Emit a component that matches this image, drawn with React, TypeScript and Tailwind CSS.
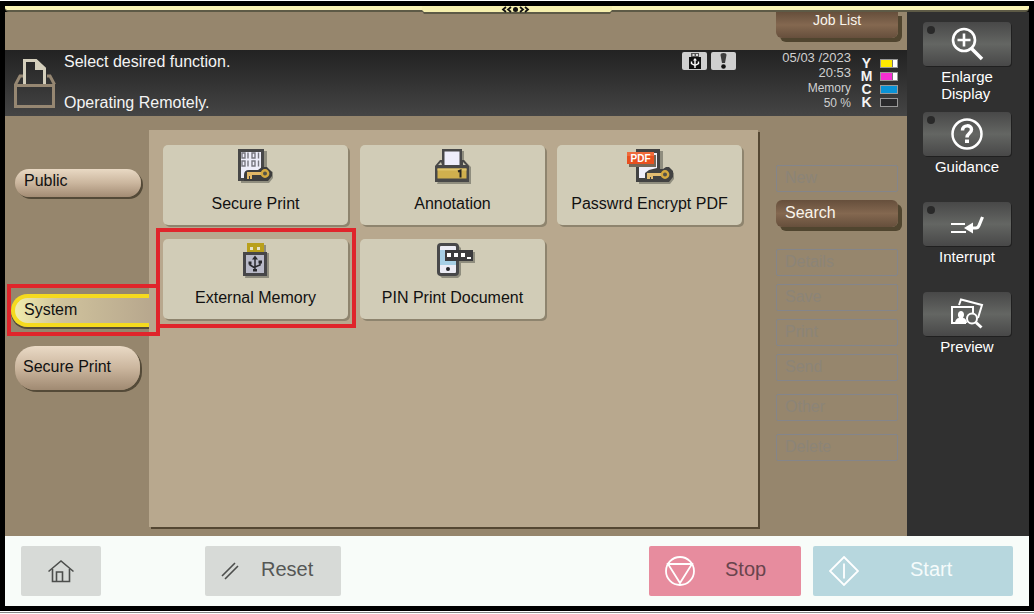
import type { ReactNode } from "react";
import clsx from "clsx";

const SecurePrintIcon = () => (
  <svg width="36" height="36" viewBox="0 0 36 36" aria-hidden="true">
    <path d="M3 3h26v18l6 3v6l-4 5H3z" fill="#8f8d7e" />
    <rect x="0" y="1" width="26" height="32" fill="#474747" />
    <rect x="3" y="4" width="20" height="26" fill="#eeeefa" />
    <g fill="none" stroke="#77777f" strokeWidth="1.4">
      <path d="M4 5h3v5H4zM10 4.500v6M14 5h3v5h-3zM20.500 4.500v6" />
      <path d="M4 13h3v5H4zM10 12.500v6M14 13h3v5h-3zM20.500 12.500v6" />
    </g>
    <g transform="translate(0 2)">
      <path d="M6 25q0-5 5-5h9l4-3h5l5 5v4l-4 5H6z" fill="#3d3d3d" />
      <path d="M9 22h15v3H14v4h-2v-3h-1v3H9z" fill="#e2b766" />
      <circle cx="27" cy="23.500" r="3.200" fill="#545448" stroke="#d5a93f" strokeWidth="2.400" />
    </g>
  </svg>
);

const AnnotationIcon = () => (
  <svg width="38" height="36" viewBox="0 0 38 36" aria-hidden="true">
    <path d="M11 3h19v9l7 7v17H3l7-18z" fill="#8f8d7e" />
    <path d="M8 1h20v11h2l5 6v16H1V18l5-6h2z" fill="#484848" />
    <path d="M7 14l-3 3h4zM29 14l3 3h-3z" fill="#c9c6b2" />
    <path d="M10.500 3.500h15V17h-15z" fill="#eeeefb" />
    <path d="M3.500 20.500h29v10h-29z" fill="#d0b04e" />
    <path d="M3.500 20.500h29v2h-29z" fill="#dfc46c" />
    <path d="M24 23.500l2.500-1v7" fill="none" stroke="#292620" strokeWidth="2" />
  </svg>
);

const PdfIcon = () => (
  <svg width="48" height="36" viewBox="0 0 48 36" aria-hidden="true">
    <path d="M13 3h24v18h6l5 4v6l-4 5H13z" fill="#8f8d7e" />
    <path d="M10 1h24v20h3l3-2h3l4 4v6l-4 5H10z" fill="#424242" />
    <path d="M13 17h15V5h3v15l-8 2-4 3v5h-6z" fill="#f0effa" />
    <path d="M3 7h27v12H3z" fill="#756757" />
    <path d="M1 4h27v12H1z" fill="#e8501f" />
    <path d="M1 4h27v4H1z" fill="#ef6b3c" />
    <text x="14.500" y="14" textAnchor="middle" fontSize="10" className="fill-white font-['Liberation_Sans',sans-serif] font-bold">
      PDF
    </text>
    <path d="M21 25h14v3h-8v3h-2v-2h-1v2h-3z" fill="#e3bd72" />
    <circle cx="39" cy="26.500" r="3.200" fill="#565349" stroke="#d5a93f" strokeWidth="2.400" />
  </svg>
);

const UsbIcon = () => (
  <svg width="28" height="36" viewBox="0 0 28 36" aria-hidden="true">
    <path d="M7 3h17v8h3v25H3l4-24z" fill="#8f8d7e" />
    <path d="M5 1h17v9H5z" fill="#b9a01c" />
    <path d="M8 5h3v3H8zM15 5h3v3h-3z" fill="#e7e3c8" />
    <path d="M1 10h24v24H1z" fill="#464648" />
    <path d="M4 13h18v18H4z" fill="#b9bac8" />
    <path d="M13 16v12M8 21v2l5 3M18 20v3l-5 2" fill="none" stroke="#29292c" strokeWidth="1.500" />
    <path d="M13 13.500l3 4h-6zM6.500 19.500h3v3h-3zM16.500 18.500h3.500v3h-3.500zM11 27h4v2.500h-4z" fill="#29292c" />
  </svg>
);

const PinIcon = () => (
  <svg width="44" height="36" viewBox="-5 0 44 36" aria-hidden="true">
    <path d="M6 3h16l3 3v4h14v11H25v12l-3 3H6l-3-3z" fill="#8f8d7e" />
    <rect x="1" y="1" width="22" height="33" rx="4" fill="#48484a" />
    <rect x="4" y="4" width="16" height="27" rx="1" fill="#ececf5" />
    <path d="M4 8h16v15H4z" fill="#a7cfe5" />
    <circle cx="12" cy="27" r="2" fill="#252529" />
    <path d="M9 8h28v11H9z" fill="#3b3b3d" />
    <path d="M11 11h4v4h-4zM18 11h4v4h-4zM25 11h4v4h-4zM31 15h4v2h-4z" fill="#fff" />
  </svg>
);

const BoxIcon = () => (
  <svg width="42" height="50" viewBox="0 0 42 50" fill="none" aria-hidden="true">
    <path d="M9 17H6L1.500 25.500M33 17h3l4.500 8.500" stroke="#968772" strokeWidth="3" />
    <path d="M1.500 26.500h38v21h-38z" stroke="#968772" strokeWidth="3" />
    <path d="M10.500 25V1.500h11.500l8.500 8V25" stroke="#d4cfbc" strokeWidth="3" />
    <path d="M21 1l11 10H21z" fill="#d4cfbc" />
  </svg>
);

const EnlargeIcon = () => (
  <svg width="34" height="34" viewBox="0 0 34 34" fill="none" stroke="#fff" strokeWidth="2.600" aria-hidden="true">
    <circle cx="14" cy="13" r="11" />
    <path d="M14 6.500v13M7.500 13h13" />
    <path d="M21.500 21.500L32 32" strokeWidth="3.500" />
  </svg>
);

const HelpIcon = () => (
  <svg width="34" height="34" viewBox="0 0 34 34" fill="none" stroke="#fff" aria-hidden="true">
    <circle cx="17" cy="17" r="14.500" strokeWidth="2.500" />
    <path d="M12.500 13.500c0-6 9-6 9-1 0 4-4.500 3.500-4.500 8" strokeWidth="3.500" />
    <path d="M15 22.500h4V26h-4z" fill="#fff" stroke="none" />
  </svg>
);

const InterruptIcon = () => (
  <svg width="34" height="20" viewBox="0 -2 34 20" fill="none" stroke="#fff" aria-hidden="true">
    <path d="M1 8h14M1 16h15" strokeWidth="2" />
    <path d="M20 12h6q2 0 3-2.500L32.500 1" strokeWidth="3.200" />
    <path d="M14 12l9-5.500v11z" fill="#fff" stroke="none" />
  </svg>
);

const PreviewIcon = () => (
  <svg width="34" height="32" viewBox="0 0 34 32" fill="none" stroke="#fff" strokeWidth="2" aria-hidden="true">
    <path d="M9 7l2-5.500 21 5.500-4 13" />
    <path d="M16 25H2V9h21v6" />
    <path d="M5 25c0-3 2-5 4-5-2-3-1-7 2-7s4 4 2 7c2 0 4 2 4 5z" fill="#fff" stroke="none" />
    <circle cx="22" cy="20.500" r="5" />
    <path d="M26 24.500l5.500 5" strokeWidth="3" />
  </svg>
);

const HomeIcon = () => (
  <svg width="26" height="24" viewBox="0 0 26 24" fill="none" stroke="#4c4e4c" strokeWidth="1.600" aria-hidden="true">
    <path d="M.5 12.500L13 2l12.500 10.500" />
    <path d="M4.500 10v12.500h17V10M8.500 22v-9h6v9" />
  </svg>
);

const toners = [
  { label: "Y", level: "bg-[#ffe900]", width: "w-[12px]" },
  { label: "M", level: "bg-[#f62ed2]", width: "w-[12px]" },
  { label: "C", level: "bg-[#0a93d6]", width: "w-full" },
  { label: "K", level: "bg-[#29292b]", width: "w-full" },
];

const tiles: { label: string; icon: ReactNode; marked?: boolean }[] = [
  { label: "Secure Print", icon: <SecurePrintIcon /> },
  { label: "Annotation", icon: <AnnotationIcon /> },
  { label: "Passwrd Encrypt PDF", icon: <PdfIcon /> },
  { label: "External Memory", icon: <UsbIcon />, marked: true },
  { label: "PIN Print Document", icon: <PinIcon /> },
];

const sideKeys: { label: string; icon: ReactNode; lamp: boolean }[] = [
  { label: "Enlarge Display", icon: <EnlargeIcon />, lamp: true },
  { label: "Guidance", icon: <HelpIcon />, lamp: true },
  { label: "Interrupt", icon: <InterruptIcon />, lamp: true },
  { label: "Preview", icon: <PreviewIcon />, lamp: false },
];

const brownButton =
  "w-[122px] bg-linear-to-b from-[#664f3c] via-[#846850] to-[#664f3c] text-[#faf5ec] shadow-[4px_4px_0_#50452f]";

const GhostButton = ({ label, className }: { label: string; className?: string }) => (
  <button
    disabled
    className={clsx(
      "h-[27px] w-[122px] rounded-xs border border-[#84858a] pb-px pl-2 text-left leading-4 text-[#8b8478]",
      className,
    )}
  >
    {label}
  </button>
);

const Header = () => (
  <header className="flex h-[66px] bg-linear-to-b from-[#222] to-[#454545] pr-[9px] pl-[9px] text-[#f4f4f4]">
    <div className="pt-[9px]">
      <BoxIcon />
    </div>
    <div className="flex flex-1 flex-col justify-between pt-[3px] pb-1 pl-2">
      <p className="leading-[18px]">Select desired function.</p>
      <p className="leading-[18px]">Operating Remotely.</p>
    </div>
    <div className="flex gap-1 pt-[2px]">
      <svg width="25" height="18" viewBox="0 0 25 18" role="img" aria-label="USB connected">
        <rect width="25" height="18" rx="2" fill="#cfcfcf" />
        <path d="M9 1h8v4H9z" fill="#555" />
        <path d="M10.500 2h2v2h-2zM14 2h2v2h-2z" fill="#ddd" />
        <path d="M7 5h12v12H7z" fill="#111" />
        <path d="M13 7v9M9.500 9.500v2l3.500 2M16.500 9.500v2l-3.500 2" fill="none" stroke="#fff" strokeWidth="1.400" />
        <path d="M11 8.500l2-2.500 2 2.500z" fill="#fff" />
      </svg>
      <svg width="25" height="18" viewBox="0 0 25 18" role="img" aria-label="Warning">
        <rect width="25" height="18" rx="2" fill="#cfcfcf" />
        <path d="M9.500 3q0-2 3-2t3 2l-1.500 8h-3z" fill="#3c3c3c" />
        <circle cx="12.500" cy="14.500" r="2.300" fill="#111" />
      </svg>
    </div>
    <div className="w-[115px] text-right text-xs leading-[15px] text-[#d0d0d0]">
      <p className="text-[13px] leading-[15px]">05/03 /2023</p>
      <p className="text-[13px] leading-[15px]">20:53</p>
      <p className="mt-px">Memory</p>
      <p>50 %</p>
    </div>
    <ul className="ml-2 pt-[7px]">
      {toners.map((toner) => (
        <li key={toner.label} className="flex h-[13px] items-center gap-[6px]">
          <span className="w-[15px] text-center text-sm leading-[13px] font-bold">{toner.label}</span>
          <span className="flex h-[9px] w-[18px] border border-[#999] bg-white">
            <span
              className={clsx("h-full", toner.level, toner.width, toner.width === "w-[12px]" && "border-r border-[#777]")}
            />
          </span>
        </li>
      ))}
    </ul>
  </header>
);

const BoxTabs = () => (
  <nav className="flex w-36 flex-col items-start pt-[53px] pl-[10px]">
    <button className="h-7 w-[126px] rounded-[14px] bg-linear-to-b from-[#e9d9c4] via-[#cbb69e] to-[#a38c74] pb-1 pl-[9px] text-left leading-5 shadow-[2px_2px_0_#544a38]">
      Public
    </button>
    <div className="relative mt-[97px] -ml-1 self-stretch">
      <button className="h-[33px] w-full rounded-l-full border-y-4 border-l-4 border-[#f5da1f] bg-linear-to-r from-[#f0edac] via-[#cfc29c] via-35% to-[#b8a88e] pb-[2px] pl-[9px] text-left leading-5 shadow-[0_2px_0_#544a38]">
        System
      </button>
      <span className="pointer-events-none absolute -top-[10px] -right-[11px] -bottom-[9px] -left-1 border-4 border-[#e0252b]" />
    </div>
    <button className="mt-[19px] h-11 w-[125px] rounded-[20px] bg-linear-to-b from-[#eadac6] via-[#cbb69e] to-[#a08a72] pb-[2px] pl-2 text-left leading-5 shadow-[2px_2px_0_#544a38]">
      Secure Print
    </button>
  </nav>
);

const FunctionPanel = () => (
  <main className="mt-[14px] mb-[9px] flex-1 bg-[#b8a88e] pt-[15px] pr-4 pl-[14px] shadow-[2px_2px_0_#544733]">
    <div className="grid grid-cols-3 gap-x-3 gap-y-[14px]">
      {tiles.map((tile) => (
        <div key={tile.label} className="relative">
          <button className="flex h-20 w-full flex-col items-center rounded-[5px] bg-[#d1ccb7] pt-[3px] shadow-[2px_2px_0_#8e846e]">
            {tile.icon}
            <span className="mt-[10px] leading-5">{tile.label}</span>
          </button>
          {tile.marked && (
            <span className="pointer-events-none absolute -top-[11px] -right-2 -bottom-[9px] -left-[7px] border-4 border-[#e0252b]" />
          )}
        </div>
      ))}
    </div>
  </main>
);

const ActionColumn = () => (
  <div className="flex w-[149px] flex-col pt-[49px] pl-[18px]">
    <GhostButton label="New" />
    <button className={clsx(brownButton, "mt-2 h-[27px] rounded-md pb-[2px] pl-[9px] text-left leading-4")}>
      Search
    </button>
    <GhostButton label="Details" className="mt-[22px]" />
    <GhostButton label="Save" className="mt-2" />
    <GhostButton label="Print" className="mt-2" />
    <GhostButton label="Send" className="mt-2" />
    <GhostButton label="Other" className="mt-[13px]" />
    <GhostButton label="Delete" className="mt-[13px]" />
  </div>
);

const SideKeys = () => (
  <aside className="w-[122px] bg-[#303030] pt-[10px] pl-4 text-[15px] text-white">
    {sideKeys.map((key) => (
      <div key={key.label} className="flex h-[90px] w-[88px] flex-col items-center">
        <button
          aria-label={key.label}
          className="relative flex h-11 w-full shrink-0 items-center justify-center rounded-sm bg-linear-to-b from-[#484848] via-[#646663] to-[#484848] shadow-[1px_1px_0_#202020]"
        >
          {key.lamp && <span className="absolute top-1 left-1 size-2 rounded-full bg-[#292929]" />}
          {key.icon}
        </button>
        <span className="mt-[2px] w-min min-w-[50px] leading-[17px]">{key.label}</span>
      </div>
    ))}
  </aside>
);

const Footer = () => (
  <footer className="flex h-[70px] items-center bg-[#f8fcf9] px-4 text-xl text-[#555755]">
    <button aria-label="Home" className="flex h-[50px] w-20 items-center justify-center rounded-xs bg-[#d7dad7]">
      <HomeIcon />
    </button>
    <button className="ml-[104px] flex h-[50px] w-[136px] items-center rounded-xs bg-[#d7dad7] pl-4">
      <svg width="18" height="18" viewBox="0 0 18 18" fill="none" stroke="#4c4e4c" strokeWidth="1.600" aria-hidden="true">
        <path d="M1 14L14 1M4 17L17 4" />
      </svg>
      <span className="ml-[22px] pb-1">Reset</span>
    </button>
    <button className="ml-auto flex h-[50px] w-[152px] items-center rounded-xs bg-[#e78c9e] pl-4 text-[#69444d]">
      <svg width="30" height="30" viewBox="0 0 30 30" fill="none" stroke="#fff" strokeWidth="1.800" aria-hidden="true">
        <circle cx="15" cy="15" r="14" />
        <path d="M3 8h24L15 27z" />
      </svg>
      <span className="ml-[30px] pb-1">Stop</span>
    </button>
    <button className="ml-3 flex h-[50px] w-[200px] items-center rounded-xs bg-[#b7d7de] pl-4 text-[#f5fbfb]">
      <svg width="30" height="30" viewBox="0 0 30 30" fill="none" stroke="#fff" strokeWidth="1.800" aria-hidden="true">
        <path d="M15 1l14 14-14 14L1 15zM15 7.500v15" />
      </svg>
      <span className="ml-[51px] pb-1">Start</span>
    </button>
  </footer>
);

export default function App() {
  return (
    <div className="flex min-h-screen flex-col bg-white pt-px pb-px font-['Liberation_Sans',Arial,sans-serif] text-base text-[#111]">
      <div className="flex flex-1 flex-col bg-black px-[5px] pt-[5px] pb-[5px]">
        {/* Pull-down strip */}
        <div className="relative h-[6px] rounded-b-sm border-b-2 border-[#5d5a46] bg-[#f9f3b4]">
          <svg
            className="absolute top-0 left-1/2 z-10 -translate-x-1/2"
            width="190"
            height="8"
            viewBox="0 0 190 8"
            aria-hidden="true"
          >
            <path d="M0 4v1l2 3h186l2-3V4" fill="#5d5a46" />
            <path d="M0 0h190v4l-2 2H2L0 4z" fill="#f5efad" />
            <g transform="translate(1)" fill="none" stroke="#111" strokeWidth="1.800">
              <path d="M83 1l-3 2.500 3 2.500M88 1l-3 2.500L88 6M102 1l3 2.500-3 2.500M97 1l3 2.500L97 6" />
            </g>
            <circle cx="93.500" cy="3.500" r="2.500" fill="#111" />
          </svg>
        </div>

        <div className="flex flex-1">
          <div className="flex flex-1 flex-col bg-[#96866d]">
            <div className="flex h-[38px] items-start justify-end pr-[9px]">
              <button className={clsx(brownButton, "h-[26px] rounded-b-md pb-[10px] text-sm leading-4")}>Job List</button>
            </div>
            <Header />
            <div className="flex flex-1">
              <BoxTabs />
              <FunctionPanel />
              <ActionColumn />
            </div>
          </div>
          <SideKeys />
        </div>

        <Footer />
      </div>
      <div className="mt-px h-px bg-[#888]" />
    </div>
  );
}
